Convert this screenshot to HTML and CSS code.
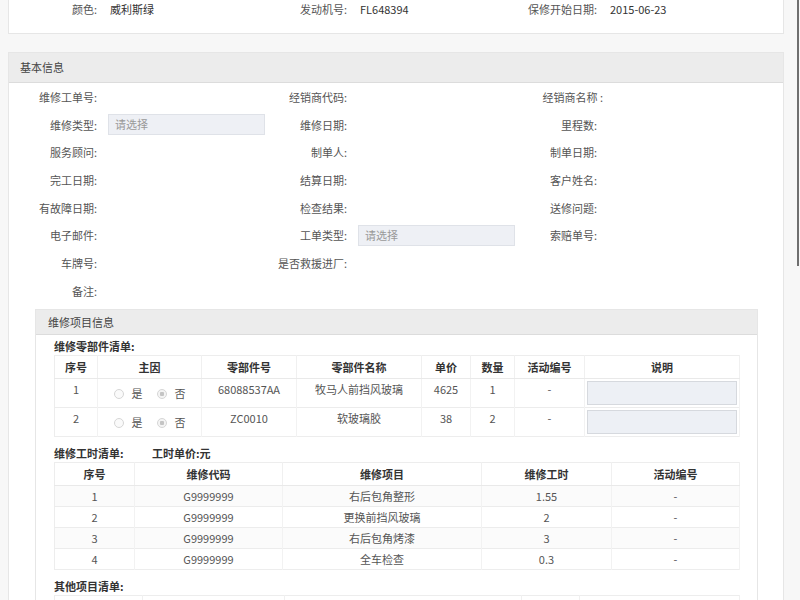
FILE: index.html
```html
<!DOCTYPE html>
<html>
<head>
    <title>维修工单</title>
    <meta charset="UTF-8">
    <link rel="stylesheet" href="styles.css">
</head>
<body>
    <div class="scroll-line"></div>
    <div class="page">
        <div class="panel top-panel">
            <div class="info-grid">
                <div class="field"><span class="label">颜色:</span><span class="value">威利斯绿</span></div>
                <div class="field"><span class="label">发动机号:</span><span class="value">FL648394</span></div>
                <div class="field"><span class="label">保修开始日期:</span><span class="value">2015-06-23</span></div>
            </div>
        </div>

        <div class="panel">
            <div class="panel-head">基本信息</div>
            <div class="form-grid">
                <div class="field"><span class="label">维修工单号:</span></div>
                <div class="field"><span class="label">经销商代码:</span></div>
                <div class="field"><span class="label label-wide">经销商名称 :</span></div>

                <div class="field"><span class="label">维修类型:</span><span class="select">请选择</span></div>
                <div class="field"><span class="label">维修日期:</span></div>
                <div class="field"><span class="label">里程数:</span></div>

                <div class="field"><span class="label">服务顾问:</span></div>
                <div class="field"><span class="label">制单人:</span></div>
                <div class="field"><span class="label">制单日期:</span></div>

                <div class="field"><span class="label">完工日期:</span></div>
                <div class="field"><span class="label">结算日期:</span></div>
                <div class="field"><span class="label">客户姓名:</span></div>

                <div class="field"><span class="label">有故障日期:</span></div>
                <div class="field"><span class="label">检查结果:</span></div>
                <div class="field"><span class="label">送修问题:</span></div>

                <div class="field"><span class="label">电子邮件:</span></div>
                <div class="field"><span class="label">工单类型:</span><span class="select">请选择</span></div>
                <div class="field"><span class="label">索赔单号:</span></div>

                <div class="field"><span class="label">车牌号:</span></div>
                <div class="field"><span class="label">是否救援进厂:</span></div>
                <div class="field"></div>

                <div class="field"><span class="label">备注:</span></div>
            </div>

            <div class="sub-panel">
                <div class="sub-head">维修项目信息</div>
                <div class="sub-body">
                    <div class="list-title">维修零部件清单:</div>
                    <table class="grid parts">
                        <colgroup>
                            <col class="w43"><col class="w104"><col class="w95"><col class="w125">
                            <col class="w49"><col class="w44"><col class="w70"><col>
                        </colgroup>
                        <tr>
                            <th>序号</th><th>主因</th><th>零部件号</th><th>零部件名称</th>
                            <th>单价</th><th>数量</th><th>活动编号</th><th>说明</th>
                        </tr>
                        <tr class="row">
                            <td>1</td>
                            <td class="radios"><span class="radio"></span>是<span class="radio checked"></span>否</td>
                            <td>68088537AA</td><td>牧马人前挡风玻璃</td><td>4625</td><td>1</td><td>-</td>
                            <td class="note"><div class="note-box"></div></td>
                        </tr>
                        <tr class="row">
                            <td>2</td>
                            <td class="radios"><span class="radio"></span>是<span class="radio checked"></span>否</td>
                            <td>ZC0010</td><td>软玻璃胶</td><td>38</td><td>2</td><td>-</td>
                            <td class="note"><div class="note-box"></div></td>
                        </tr>
                    </table>

                    <div class="list-title title-gap"><span class="title-main">维修工时清单:</span>工时单价:元</div>
                    <table class="grid hours">
                        <colgroup>
                            <col class="w80"><col class="w148"><col class="w199"><col class="w130"><col>
                        </colgroup>
                        <tr><th>序号</th><th>维修代码</th><th>维修项目</th><th>维修工时</th><th>活动编号</th></tr>
                        <tr><td>1</td><td>G9999999</td><td>右后包角整形</td><td>1.55</td><td>-</td></tr>
                        <tr><td>2</td><td>G9999999</td><td>更换前挡风玻璃</td><td>2</td><td>-</td></tr>
                        <tr><td>3</td><td>G9999999</td><td>右后包角烤漆</td><td>3</td><td>-</td></tr>
                        <tr><td>4</td><td>G9999999</td><td>全车检查</td><td>0.3</td><td>-</td></tr>
                    </table>

                    <div class="list-title title-gap">其他项目清单:</div>
                    <table class="grid others">
                        <colgroup>
                            <col class="w88"><col class="w142"><col class="w237"><col class="w58"><col>
                        </colgroup>
                        <tr><th>序号</th><th>项目代码</th><th>项目名称</th><th>金额</th><th>活动编号</th></tr>
                        <tr><td>1</td><td>-</td><td>-</td><td>-</td><td>-</td></tr>
                    </table>
                </div>
            </div>
        </div>
    </div>
</body>
</html>
```

FILE: styles.css
```css
body {
    margin: 0;
    padding: 0;
    background-color: #f7f7f7;
    font-family: "Noto Sans CJK SC", "Liberation Sans", sans-serif;
    font-size: 11px;
    color: #555;
}
.scroll-line {
    position: fixed;
    top: 0;
    right: 1px;
    width: 2px;
    height: 266px;
    background-color: #6f6f6f;
}
.page {
    width: 776px;
    margin-left: 8px;
}
.panel {
    background-color: #fff;
    border: 1px solid #e6e6e6;
}
.top-panel {
    border-top: none;
    height: 33px;
    margin-bottom: 18px;
}
.info-grid,
.form-grid {
    display: grid;
    grid-template-columns: repeat(3, 250px);
}
.info-grid .field {
    height: 18px;
}
.form-grid {
    grid-auto-rows: 27.7px;
}
.field {
    display: flex;
    align-items: center;
}
.label {
    flex: none;
    width: 88px;
    text-align: right;
    white-space: nowrap;
}
.label-wide {
    width: 94px;
    margin-right: -6px;
}
.value {
    margin-left: 13px;
    color: #333;
}
.select {
    flex: none;
    box-sizing: border-box;
    margin-left: 11px;
    width: 157px;
    height: 21px;
    line-height: 19px;
    padding-left: 6px;
    border: 1px solid #dfe2e8;
    background-color: #eef0f5;
    color: #999;
}
.panel-head {
    height: 29px;
    line-height: 29px;
    padding-left: 11px;
    background-color: #ececec;
    border-bottom: 1px solid #dcdcdc;
    color: #444;
}
.sub-panel {
    margin: 4px 25px 0 26px;
    border: 1px solid #e6e6e6;
}
.sub-head {
    height: 24px;
    line-height: 24px;
    padding-left: 12px;
    background-color: #ececec;
    border-bottom: 1px solid #dcdcdc;
    color: #444;
}
.sub-body {
    padding: 2px 17px 0 18px;
}
.list-title {
    font-weight: bold;
    color: #333;
    line-height: 18px;
}
.title-gap {
    margin-top: 7px;
}
.title-main {
    display: inline-block;
    width: 98px;
}
.grid {
    width: 100%;
    table-layout: fixed;
    border-collapse: collapse;
    border: 1px solid #ededed;
}
.grid th {
    height: 22px;
    padding: 0;
    font-weight: bold;
    color: #333;
    border-right: 1px solid #f0f0f0;
    border-bottom: 1px solid #e9e9e9;
}
.grid td {
    padding: 0;
    text-align: center;
    color: #555;
    border-top: 1px solid #ececec;
    border-right: 1px solid #f2f2f2;
}
.parts tr.row {
    height: 29px;
}
.parts td {
    vertical-align: top;
    line-height: 18px;
    padding-top: 1px;
}
.parts td.radios {
    padding-top: 5px;
}
.parts td.note {
    padding: 2px 2px 1px;
}
.note-box {
    box-sizing: border-box;
    height: 24px;
    border: 1px solid #d6d9de;
    background-color: #edf0f5;
}
.radio {
    display: inline-block;
    box-sizing: border-box;
    width: 10px;
    height: 10px;
    margin: 0 8px 0 0;
    vertical-align: -1px;
    border: 1px solid #d6d6d6;
    border-radius: 50%;
    background-color: #fafafa;
}
.radio.checked {
    margin-left: 14px;
    background: radial-gradient(circle, #c4c4c4 0, #c4c4c4 2px, #f4f4f4 2.5px);
}
.hours td {
    height: 20px;
}
.hours tr:nth-child(even) td {
    background-color: #fbfbfb;
}
.w43 { width: 43px; }
.w44 { width: 44px; }
.w49 { width: 49px; }
.w58 { width: 58px; }
.w70 { width: 70px; }
.w80 { width: 80px; }
.w88 { width: 88px; }
.w95 { width: 95px; }
.w104 { width: 104px; }
.w125 { width: 125px; }
.w130 { width: 130px; }
.w142 { width: 142px; }
.w148 { width: 148px; }
.w199 { width: 199px; }
.w237 { width: 237px; }
```
